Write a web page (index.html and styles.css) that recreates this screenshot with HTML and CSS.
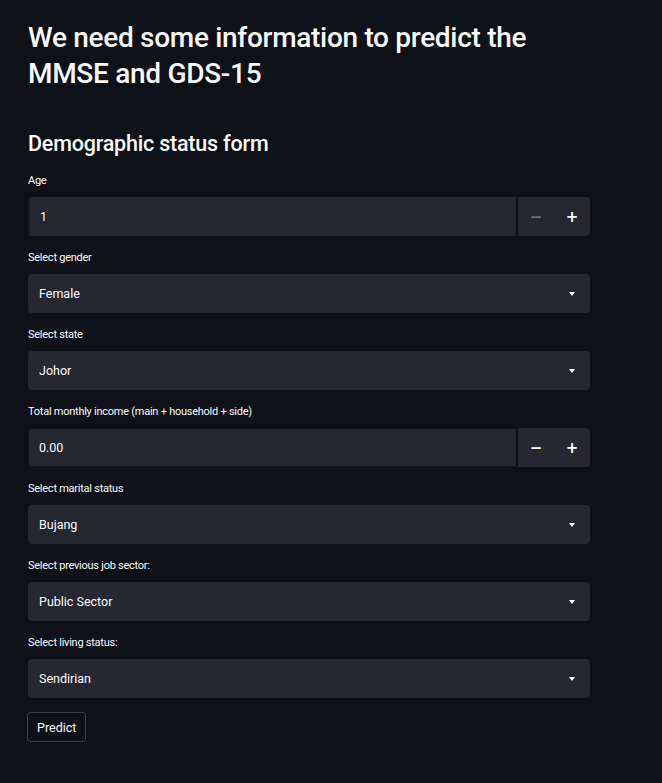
FILE: index.html
```html
<!DOCTYPE html>
<html lang="en">
<head>
  <meta charset="UTF-8" />
  <meta name="viewport" content="width=device-width, initial-scale=1.0"/>
  <title>MMSE and GDS-15 Prediction</title>
  <link rel="stylesheet" href="styles.css">
</head>
<body>
  <div class="main">
    <h1>We need some information to predict the MMSE and GDS-15</h1>

    <form class="form">
      <h2>Demographic status form</h2>

      <div class="field">
        <label>Age</label>
        <div class="number">
          <div class="number-input"><input type="text" value="1" /></div>
          <button type="button" class="step dim">&minus;</button>
          <button type="button" class="step">+</button>
        </div>
      </div>

      <div class="field">
        <label>Select gender</label>
        <div class="select"><span>Female</span><span class="caret"></span></div>
      </div>

      <div class="field">
        <label>Select state</label>
        <div class="select"><span>Johor</span><span class="caret"></span></div>
      </div>

      <div class="field">
        <label>Total monthly income (main + household + side)</label>
        <div class="number">
          <div class="number-input outlined"><input type="text" value="0.00" /></div>
          <button type="button" class="step">&minus;</button>
          <button type="button" class="step">+</button>
        </div>
      </div>

      <div class="field">
        <label>Select marital status</label>
        <div class="select"><span>Bujang</span><span class="caret"></span></div>
      </div>

      <div class="field">
        <label>Select previous job sector:</label>
        <div class="select"><span>Public Sector</span><span class="caret"></span></div>
      </div>

      <div class="field">
        <label>Select living status:</label>
        <div class="select"><span>Sendirian</span><span class="caret"></span></div>
      </div>

      <button type="button" class="predict">Predict</button>
    </form>
  </div>
</body>
</html>
```

FILE: styles.css
```css
body {
  font-family: Roboto, "Noto Sans", sans-serif;
  background-color: #0e1117;
  color: #fafafa;
  margin: 0;
  padding: 0;
}
.main {
  width: 562px;
  padding: 20px 28px 40px;
}
h1 {
  font-size: 28px;
  font-weight: 500;
  line-height: 36px;
  margin: 0;
  letter-spacing: -0.3px;
}
h2 {
  font-size: 21.5px;
  font-weight: 500;
  line-height: 28px;
  margin: 38px 0 15px;
  letter-spacing: -0.2px;
}
.field {
  margin-bottom: 14px;
}
label {
  display: block;
  font-size: 11px;
  line-height: 16px;
  margin-bottom: 8px;
  color: #fafafa;
  letter-spacing: -0.25px;
}
.number {
  display: flex;
  height: 39px;
  background-color: #262730;
  border-radius: 4px;
  overflow: hidden;
}
.number-input {
  flex: 1;
  border-left: 2px solid #1b1d24;
  border-right: 2px solid #0e1117;
}
.number-input.outlined {
  border: 1px solid #15171d;
  border-right: 2px solid #0e1117;
  border-radius: 4px 0 0 4px;
}
.number-input input {
  width: 100%;
  height: 100%;
  box-sizing: border-box;
  background: transparent;
  border: none;
  color: #fafafa;
  font-family: inherit;
  font-size: 12.5px;
  padding: 0 10px;
  outline: none;
}
.step {
  width: 36px;
  background: transparent;
  border: none;
  color: #fafafa;
  font-family: "DejaVu Sans", sans-serif;
  font-size: 15px;
  font-weight: bold;
  padding: 0;
  cursor: pointer;
}
.step.dim {
  color: #6b6d78;
}
.select {
  display: flex;
  align-items: center;
  justify-content: space-between;
  height: 39px;
  background-color: #262730;
  border-radius: 4px;
  padding: 0 15px 0 11px;
  font-size: 12.5px;
}
.caret {
  width: 0;
  height: 0;
  border-left: 3px solid transparent;
  border-right: 3px solid transparent;
  border-top: 4px solid #fafafa;
}
.predict {
  margin-left: -1px;
  background-color: #0e1117;
  color: #fafafa;
  border: 1px solid rgba(250, 250, 250, 0.2);
  border-radius: 4px;
  font-family: inherit;
  font-size: 12.5px;
  height: 30px;
  padding: 0 9px;
  cursor: pointer;
}
```
